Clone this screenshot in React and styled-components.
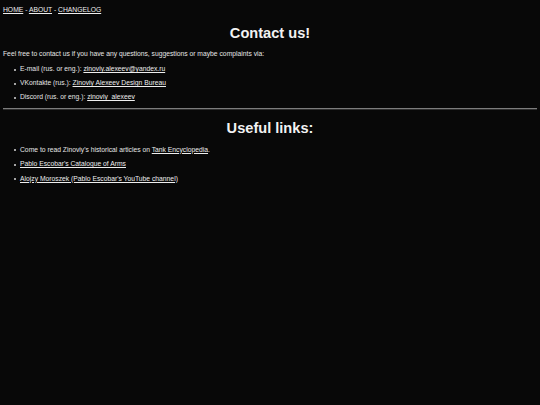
import React from "react";
import styled, { createGlobalStyle } from "styled-components";

const GlobalStyle = createGlobalStyle`
  html, body {
    margin: 0;
    padding: 0;
    background: #080808;
  }
  body {
    min-height: 405px;
    font-family: "Liberation Sans", Arial, sans-serif;
    color: #e6e6e6;
  }
`;

const Page = styled.div`
  padding: 6px 3px;
  font-size: 6.75px;
  line-height: 8px;
`;

const Nav = styled.nav`
  height: 8px;
`;

const Link = styled.a`
  color: #eeeeee;
  text-decoration: underline;
`;

const Heading = styled.h1`
  margin: ${(p) => p.$top}px 0 0;
  font-size: 14.6px;
  line-height: 17px;
  font-weight: 700;
  text-align: center;
  color: #f2f2f2;
`;

const Text = styled.p`
  margin: 8.5px 0 0;
`;

const List = styled.ul`
  margin: ${(p) => p.$top}px 0 0;
  padding-left: 17px;
  list-style: none;
`;

const Item = styled.li`
  position: relative;
  margin-top: ${(p) => p.$gap}px;

  &:first-child {
    margin-top: 0;
  }

  &::before {
    content: "";
    position: absolute;
    left: -6px;
    top: 3.5px;
    width: 2px;
    height: 2px;
    border-radius: 50%;
    background: #d8d8d8;
  }
`;

const Rule = styled.hr`
  margin: 7px 0 0;
  border: 0;
  border-top: 1px solid #7c7c7c;
  border-bottom: 1px solid #2e2e2e;
  height: 0;
`;

export default function App() {
  return (
    <>
      <GlobalStyle />
      <Page>
        <Nav>
          <Link href="#">HOME</Link> - <Link href="#">ABOUT</Link> -{" "}
          <Link href="#">CHANGELOG</Link>
        </Nav>

        <Heading $top={10.5}>Contact us!</Heading>
        <Text>
          Feel free to contact us if you have any questions, suggestions or
          maybe complaints via:
        </Text>
        <List $top={7}>
          <Item $gap={6}>
            E-mail (rus. or eng.): <Link href="#">zinoviy.alexeev@yandex.ru</Link>
          </Item>
          <Item $gap={6}>
            VKontakte (rus.): <Link href="#">Zinoviy Alexeev Design Bureau</Link>
          </Item>
          <Item $gap={6}>
            Discord (rus. or eng.): <Link href="#">zinoviy_alexeev</Link>
          </Item>
        </List>

        <Rule />

        <Heading $top={10}>Useful links:</Heading>
        <List $top={8.5}>
          <Item $gap={6.5}>
            Come to read Zinoviy's historical articles on{" "}
            <Link href="#">Tank Encyclopedia</Link>.
          </Item>
          <Item $gap={6.5}>
            <Link href="#">Pablo Escobar's Catalogue of Arms</Link>
          </Item>
          <Item $gap={6.5}>
            <Link href="#">Alojzy Moroszek (Pablo Escobar's YouTube channel)</Link>
          </Item>
        </List>
      </Page>
    </>
  );
}
